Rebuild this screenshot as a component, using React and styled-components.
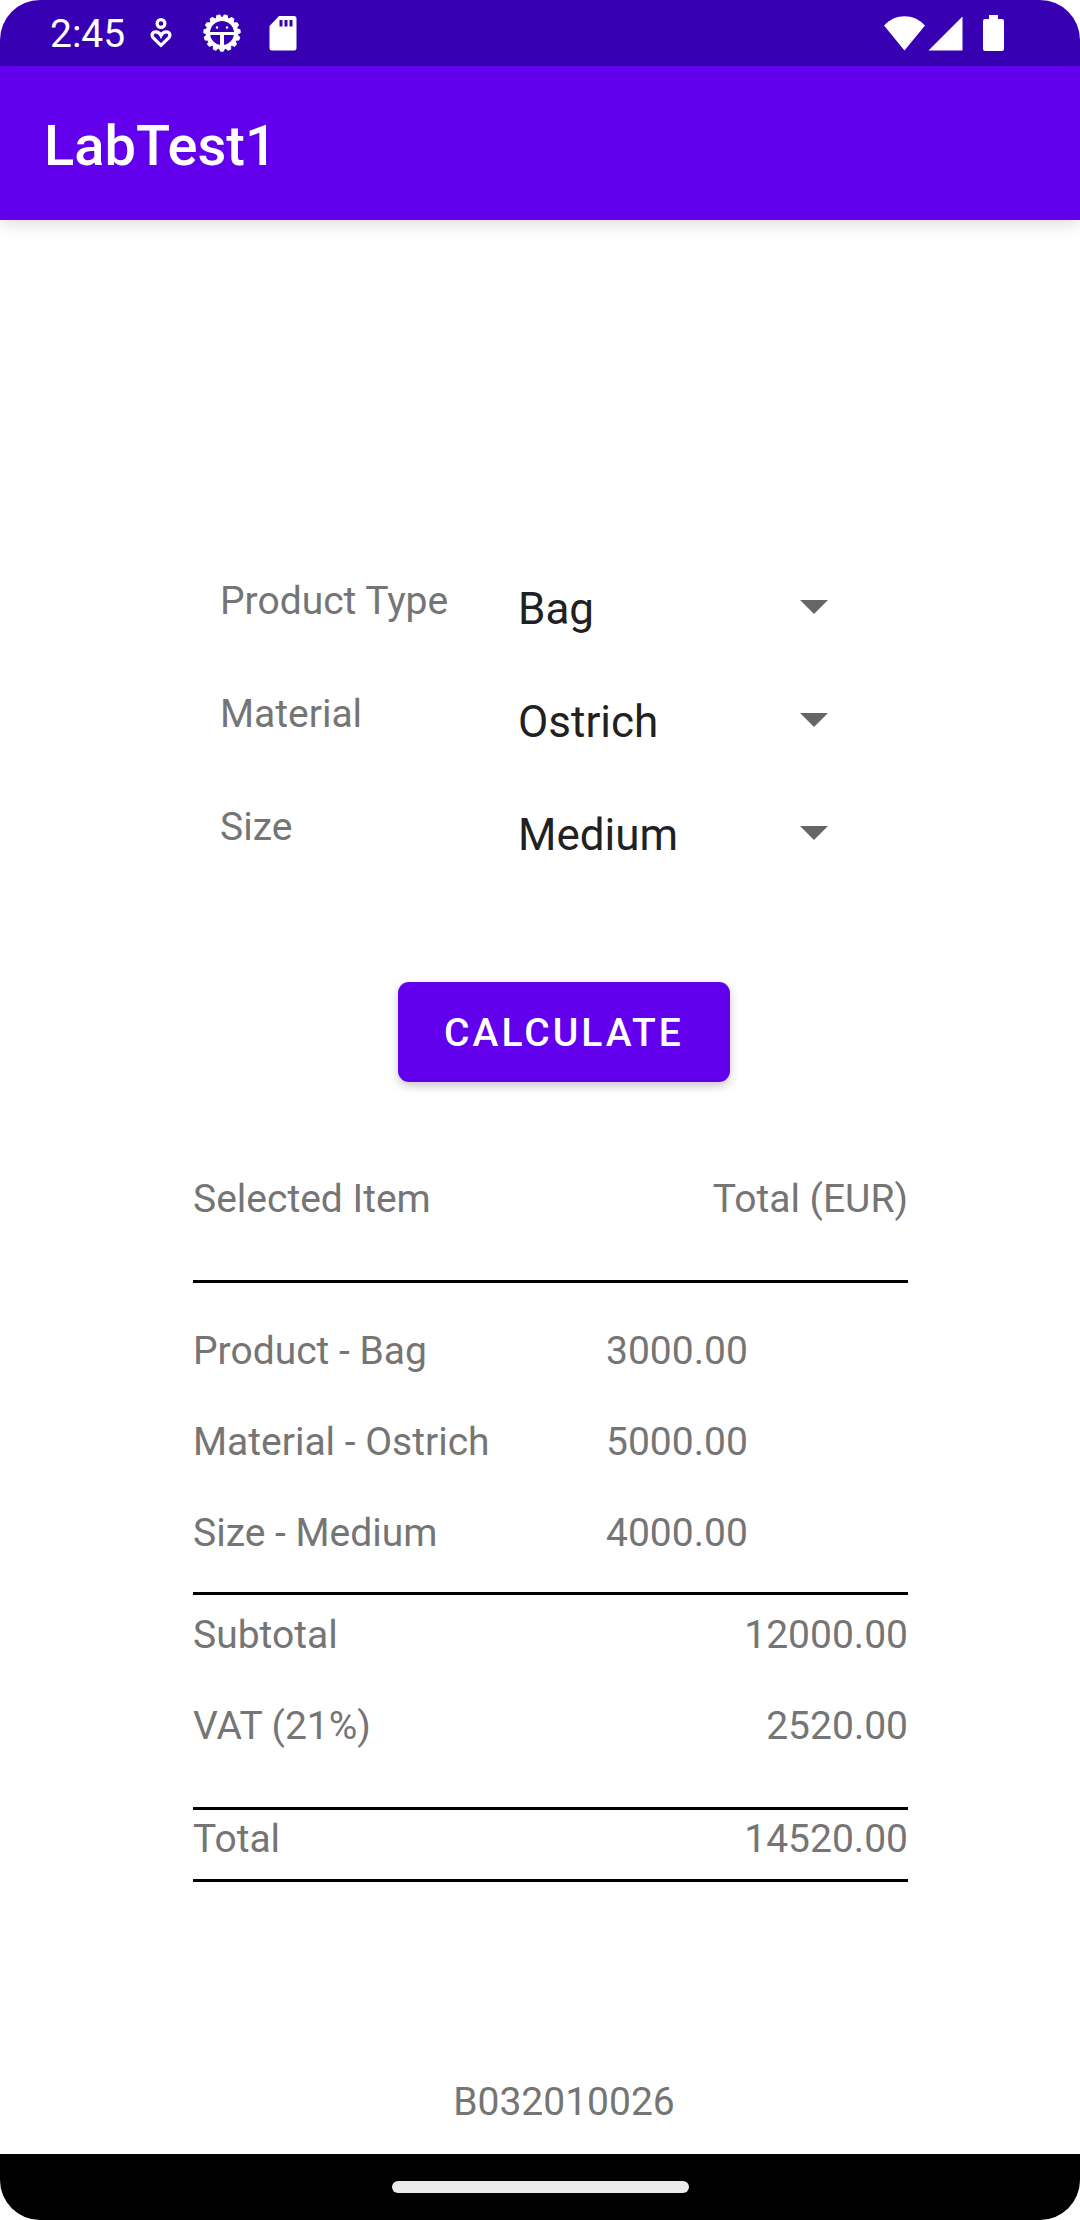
import React, { useState } from "react";
import styled, { createGlobalStyle } from "styled-components";

const GlobalStyle = createGlobalStyle`
  *, *::before, *::after { box-sizing: border-box; }
  body { margin: 0; background: #ffffff; }
`;

const Screen = styled.div`
  display: flex;
  flex-direction: column;
  min-height: 100vh;
  overflow: hidden;
  border-radius: 40px;
  background: #ffffff;
  color: #757575;
  font-family: Roboto, "Noto Sans", sans-serif;
  font-size: 39px;
  line-height: 52px;
`;

const StatusBar = styled.div`
  display: flex;
  align-items: center;
  justify-content: space-between;
  height: 66px;
  padding: 0 76px 0 50px;
  background: #3700b3;
  color: #ffffff;
`;

const StatusGroup = styled.div`
  display: flex;
  align-items: center;
`;

const Clock = styled.time`
  padding-top: 2px;
`;

const StatusIcon = styled.svg`
  display: block;
  flex: none;
  margin-left: ${(p) => p.$gap || 0}px;
`;

const AppBar = styled.header`
  display: flex;
  align-items: center;
  height: 154px;
  padding: 6px 44px 0;
  background: #6200ee;
  color: #ffffff;
  box-shadow: 0 4px 16px rgba(0, 0, 0, 0.14);
`;

const Title = styled.h1`
  margin: 0;
  font-size: 56px;
  font-weight: 500;
  line-height: 72px;
`;

const Main = styled.main`
  display: flex;
  flex: 1;
  flex-direction: column;
  padding-top: 355px;
`;

const Form = styled.form`
  display: flex;
  flex-direction: column;
  gap: 45px;
`;

const Field = styled.div`
  display: grid;
  grid-template-columns: 298px 1fr;
  align-items: start;
  padding: 0 252px 0 220px;
`;

const Picker = styled.div`
  display: grid;
  align-items: center;

  > * { grid-area: 1 / 1; }
`;

const Select = styled.select`
  appearance: none;
  width: 100%;
  height: 68px;
  margin: 0;
  padding: 0 40px 0 0;
  border: 0;
  background: transparent;
  color: #212121;
  font-family: inherit;
  font-size: 44px;
  line-height: 68px;
`;

const Arrow = styled.svg`
  justify-self: end;
  pointer-events: none;
`;

const CenterRow = styled.div`
  display: flex;
  justify-content: center;
  padding-left: 48px;
`;

const ActionRow = styled(CenterRow)`
  margin-top: 68px;
`;

const Button = styled.button`
  height: 100px;
  padding: 2px 46px 0;
  border: 0;
  border-radius: 11px;
  background: #6200ee;
  color: #ffffff;
  font-family: inherit;
  font-size: 39px;
  font-weight: 500;
  letter-spacing: 3px;
  line-height: 52px;
  text-transform: uppercase;
  box-shadow: 0 4px 10px rgba(0, 0, 0, 0.22);
`;

const Bill = styled.section`
  padding: 0 172px 0 193px;
  margin-top: 90px;
`;

const Table = styled.table`
  width: 100%;
  border-spacing: 0;
  table-layout: fixed;
  text-align: left;
`;

const LabelCol = styled.col`
  width: 413px;
`;

const Row = styled.tr`
  > * {
    padding: ${(p) => p.$top}px 0 ${(p) => p.$bottom || 0}px;
    border-bottom: ${(p) => (p.$ruled ? "3px solid #000000" : "0")};
    font-weight: 400;
    text-align: left;
  }
  > [data-end] { text-align: right; }
`;

const Footer = styled.footer`
  margin-top: auto;
  padding-bottom: 26px;
`;

const NavBar = styled.nav`
  display: flex;
  align-items: center;
  justify-content: center;
  height: 66px;
  background: #000000;
`;

const Pill = styled.div`
  width: 297px;
  height: 12px;
  border-radius: 6px;
  background: #ebebeb;
`;

const FIELDS = [
  { id: "product", label: "Product Type", options: ["Bag", "Shoes", "Wallet"] },
  { id: "material", label: "Material", options: ["Ostrich", "Leather", "Suede"] },
  { id: "size", label: "Size", options: ["Medium", "Small", "Large"] },
];

function GearIcon() {
  const teeth = Array.from({ length: 15 }, (_, i) => 90 + i * 24);
  return (
    <StatusIcon $gap={31} width="38" height="40" viewBox="0 0 38 40">
      <circle cx="19" cy="20" r="14" fill="none" stroke="#fff" strokeWidth="4" />
      {teeth.map((a) => (
        <path
          key={a}
          d="M34 17.2l3.200 1.400l0 2.800l-3.200 1.400z"
          fill="#fff"
          stroke="#fff"
          strokeLinejoin="round"
          transform={`rotate(${a} 19 20)`}
        />
      ))}
      <path d="M5 20.500h28" fill="none" stroke="#fff" strokeWidth="3" />
      <path d="M19 21v13" fill="none" stroke="#fff" strokeWidth="4" />
      <circle cx="14" cy="14.500" r="1.200" fill="#fff" />
      <circle cx="24" cy="14.500" r="1.200" fill="#fff" />
    </StatusIcon>
  );
}

export default function App() {
  const [values, setValues] = useState({ product: "Bag", material: "Ostrich", size: "Medium" });

  return (
    <>
      <GlobalStyle />
      <Screen>
        <StatusBar>
          <StatusGroup>
            <Clock>2:45</Clock>
            <StatusIcon $gap={25} width="22" height="30" viewBox="0 0 22 30">
              <circle cx="11" cy="5.500" r="3.900" fill="none" stroke="#fff" strokeWidth="3.200" />
              <path d="M11 27.300L3.300 19.800C1 17.300 2.200 13.900 5.800 13.900C8.500 13.900 10.200 15.900 11 17.600C11.800 15.900 13.500 13.900 16.200 13.900C19.800 13.900 21 17.300 18.700 19.800Z" fill="none" stroke="#fff" strokeWidth="3.200" />
            </StatusIcon>
            <GearIcon />
            <StatusIcon $gap={28} width="28" height="35" viewBox="0 0 28 35">
              <path fillRule="evenodd" fill="#fff" d="M10 0H25a2.500 2.500 0 0 1 2.500 2.500V32a2.500 2.500 0 0 1-2.500 2.500H3A2.500 2.500 0 0 1 .5 32V10zM10.500 4v6.500h3V4zM15.500 4v6.500h3V4zM20.500 4v6.500h3V4z" />
            </StatusIcon>
          </StatusGroup>
          <StatusGroup>
            <StatusIcon width="41" height="35" viewBox="0 0 41 35">
              <path d="M0 9.500C11-3 30-3 41 9.500L20.500 34.500z" fill="#fff" />
            </StatusIcon>
            <StatusIcon $gap={3} width="35" height="35" viewBox="0 0 35 35">
              <path d="M34.500 0.500V34.500H0.500z" fill="#fff" />
            </StatusIcon>
            <StatusIcon $gap={20} width="21" height="36" viewBox="0 0 21 36">
              <path d="M6 0h9v4h4a2 2 0 0 1 2 2v28a2 2 0 0 1-2 2H2a2 2 0 0 1-2-2V6a2 2 0 0 1 2-2h4z" fill="#fff" />
            </StatusIcon>
          </StatusGroup>
        </StatusBar>
        <AppBar>
          <Title>LabTest1</Title>
        </AppBar>
        <Main>
          <Form onSubmit={(e) => e.preventDefault()}>
            {FIELDS.map((f) => (
              <Field key={f.id}>
                <label htmlFor={f.id}>{f.label}</label>
                <Picker>
                  <Select
                    id={f.id}
                    value={values[f.id]}
                    onChange={(e) => setValues({ ...values, [f.id]: e.target.value })}
                  >
                    {f.options.map((o) => (
                      <option key={o}>{o}</option>
                    ))}
                  </Select>
                  <Arrow width="28" height="18" viewBox="0 0 28 18" aria-hidden="true">
                    <path d="M0 0h28L14 14z" fill="#666666" />
                  </Arrow>
                </Picker>
              </Field>
            ))}
            <ActionRow>
              <Button type="submit">Calculate</Button>
            </ActionRow>
          </Form>
          <Bill>
            <Table>
              <colgroup>
                <LabelCol />
                <col />
              </colgroup>
              <thead>
                <Row $top={1} $bottom={55} $ruled>
                  <th scope="col">Selected Item</th>
                  <th scope="col" data-end>Total (EUR)</th>
                </Row>
              </thead>
              <tbody>
                <Row $top={42}>
                  <td>Product - Bag</td>
                  <td>3000.00</td>
                </Row>
                <Row $top={39}>
                  <td>Material - Ostrich</td>
                  <td>5000.00</td>
                </Row>
                <Row $top={39} $bottom={33} $ruled>
                  <td>Size - Medium</td>
                  <td>4000.00</td>
                </Row>
              </tbody>
              <tfoot>
                <Row $top={14}>
                  <td>Subtotal</td>
                  <td data-end>12000.00</td>
                </Row>
                <Row $top={39} $bottom={55} $ruled>
                  <td>VAT (21%)</td>
                  <td data-end>2520.00</td>
                </Row>
                <Row $top={3} $bottom={14} $ruled>
                  <td>Total</td>
                  <td data-end>14520.00</td>
                </Row>
              </tfoot>
            </Table>
          </Bill>
          <Footer>
            <CenterRow>B032010026</CenterRow>
          </Footer>
        </Main>
        <NavBar>
          <Pill />
        </NavBar>
      </Screen>
    </>
  );
}
